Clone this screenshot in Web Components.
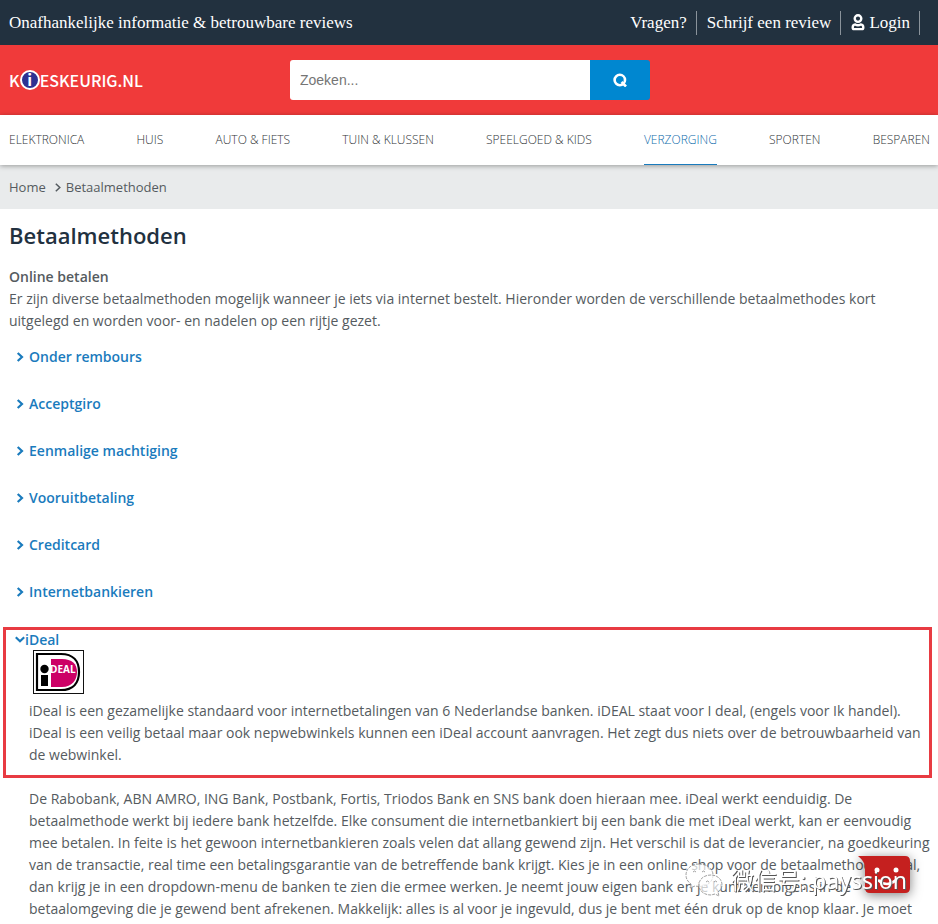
<!DOCTYPE html>
<html lang="nl">
<head>
<meta charset="utf-8">
<meta name="viewport" content="width=device-width, initial-scale=1">
<title>Betaalmethoden - Kieskeurig.nl</title>
<style>
  body {
    margin: 0;
    background: #fff;
    color: #555b60;
    font: 14px/22px "Open Sans", "Noto Sans", sans-serif;
  }
  main {
    padding: 11px 8px 0 9px;
  }
  h1 {
    margin: 0 0 16px;
    color: #22313f;
    font-size: 22px;
    font-weight: 600;
    line-height: 30px;
  }
  h2 {
    margin: 0;
    font-size: 14px;
    font-weight: 600;
    line-height: 22px;
  }
  p {
    margin: 0;
  }
  .more {
    margin: 10px 0 0 20px;
  }
</style>
</head>
<body>
<top-bar>
  Onafhankelijke informatie &amp; betrouwbare reviews
  <a slot="links" href="#vragen">Vragen?</a>
  <a slot="links" href="#review">Schrijf een review</a>
  <a slot="links" href="#login"><user-icon></user-icon>Login</a>
</top-bar>
<site-header></site-header>
<site-nav active="Verzorging"></site-nav>
<bread-crumb>
  <a slot="home" href="#home">Home</a>
  Betaalmethoden
</bread-crumb>
<main>
  <h1>Betaalmethoden</h1>
  <h2>Online betalen</h2>
  <p>Er zijn diverse betaalmethoden mogelijk wanneer je iets via internet bestelt. Hieronder worden de verschillende betaalmethodes kort uitgelegd en worden voor- en nadelen op een rijtje gezet.</p>
  <pay-method>Onder rembours</pay-method>
  <pay-method>Acceptgiro</pay-method>
  <pay-method>Eenmalige machtiging</pay-method>
  <pay-method>Vooruitbetaling</pay-method>
  <pay-method>Creditcard</pay-method>
  <pay-method>Internetbankieren</pay-method>
  <open-method name="iDeal">
    <ideal-logo></ideal-logo>
    <p>iDeal is een gezamelijke standaard voor internetbetalingen van 6 Nederlandse banken. iDEAL staat voor I deal, (engels voor Ik handel). iDeal is een veilig betaal maar ook nepwebwinkels kunnen een iDeal account aanvragen. Het zegt dus niets over de betrouwbaarheid van de webwinkel.</p>
  </open-method>
  <p class="more">De Rabobank, ABN AMRO, ING Bank, Postbank, Fortis, Triodos Bank en SNS bank doen hieraan mee. iDeal werkt eenduidig. De betaalmethode werkt bij iedere bank hetzelfde. Elke consument die internetbankiert bij een bank die met iDeal werkt, kan er eenvoudig mee betalen. In feite is het gewoon internetbankieren zoals velen dat allang gewend zijn. Het verschil is dat de leverancier, na goedkeuring van de transactie, real time een betalingsgarantie van de betreffende bank krijgt. Kies je in een online shop voor de betaalmethode iDeal, dan krijg je in een dropdown-menu de banken te zien die ermee werken. Je neemt jouw eigen bank en je kunt vervolgens in de betaalomgeving die je gewend bent afrekenen. Makkelijk: alles is al voor je ingevuld, dus je bent met één druk op de knop klaar. Je moet</p>
</main>
<chat-badge></chat-badge>
<account-mark>微信号: payssion</account-mark>

<script>
class TopBar extends HTMLElement {
  connectedCallback() {
    this.attachShadow({ mode: 'open' });
    this.shadowRoot.innerHTML = `
      <style>
        :host {
          display: flex;
          justify-content: space-between;
          align-items: center;
          height: 45px;
          padding: 0 18px 0 9px;
          background: #22313f;
          color: #fff;
          font: 17px/24px "Liberation Serif", serif;
        }
        .links {
          display: flex;
        }
        ::slotted(a) {
          display: flex;
          align-items: center;
          gap: 4px;
          padding: 0 9px 0 10px;
          border-right: 1px solid #8a939b;
          color: #fff;
          text-decoration: none;
        }
      </style>
      <div><slot></slot></div>
      <nav class="links"><slot name="links"></slot></nav>
    `;
  }
}
customElements.define('top-bar', TopBar);

class UserIcon extends HTMLElement {
  connectedCallback() {
    this.attachShadow({ mode: 'open' });
    this.shadowRoot.innerHTML = `
      <style>
        :host { display: block; line-height: 0; }
      </style>
      <svg width="14" height="17" viewBox="0 0 14 17" fill="none" stroke="#fff" stroke-width="2.4">
        <circle cx="7" cy="4.6" r="3.3"/>
        <path d="M4.200 10.400C2.600 10.600 1.700 11.600 1.700 13.400c0 1.200.5 1.700 1.400 1.700h7.800c.9 0 1.400-.5 1.400-1.700 0-1.800-.9-2.800-2.500-3-1.600 1-4 1-5.600 0z"/>
      </svg>
    `;
  }
}
customElements.define('user-icon', UserIcon);

class SiteHeader extends HTMLElement {
  connectedCallback() {
    this.attachShadow({ mode: 'open' });
    this.shadowRoot.innerHTML = `
      <style>
        :host {
          display: grid;
          grid-template-columns: 1fr 360px 1fr;
          align-items: center;
          height: 70px;
          padding: 0 7px 0 9px;
          background: #f03a3a;
        }
        .logo {
          display: flex;
          align-items: center;
          color: #fff;
          font: 500 16px/24px "Noto Sans CJK SC", "Open Sans", sans-serif;
          text-decoration: none;
        }
        .dot {
          box-sizing: border-box;
          width: 20px;
          height: 20px;
          border: 2px solid #fff;
          border-radius: 50%;
          background: #2e3192;
          font-weight: 700;
          line-height: 15px;
          text-align: center;
        }
        form {
          display: flex;
          height: 40px;
        }
        input {
          flex: 1;
          min-width: 0;
          padding: 0 10px;
          border: 0;
          border-radius: 3px 0 0 3px;
          background: #fff;
          font: 14px "Liberation Sans", sans-serif;
        }
        input::placeholder { color: #757575; }
        button {
          display: flex;
          align-items: center;
          justify-content: center;
          width: 60px;
          padding: 0;
          border: 0;
          border-radius: 0 3px 3px 0;
          background: #0087d0;
        }
      </style>
      <a class="logo" href="#home">K<span class="dot">i</span>ESKEURIG.NL</a>
      <form>
        <input type="text" placeholder="Zoeken..." aria-label="Zoeken">
        <button type="button" aria-label="Zoek">
          <svg width="14" height="14" viewBox="0 0 14 14" fill="none" stroke="#fff" stroke-width="2.6">
            <circle cx="6.800" cy="7" r="5.200"/>
            <path d="M8.500 9l4.500 4.500"/>
          </svg>
        </button>
      </form>
    `;
  }
}
customElements.define('site-header', SiteHeader);

class SiteNav extends HTMLElement {
  connectedCallback() {
    const items = ['Elektronica', 'Huis', 'Auto & Fiets', 'Tuin & Klussen', 'Speelgoed & Kids', 'Verzorging', 'Sporten', 'Besparen'];
    const active = this.getAttribute('active');
    this.attachShadow({ mode: 'open' });
    this.shadowRoot.innerHTML = `
      <style>
        :host {
          display: block;
          position: relative;
          background: #fff;
          box-shadow: 0 1px 5px rgba(0,0,0,0.35);
        }
        nav {
          display: flex;
          justify-content: space-between;
          padding: 0 8px 0 9px;
        }
        a {
          box-sizing: border-box;
          height: 50px;
          border-bottom: 1px solid transparent;
          color: #303437;
          font-size: 12px;
          font-weight: 300;
          line-height: 49px;
          text-decoration: none;
          text-transform: uppercase;
        }
        .active {
          border-color: #1a7bbd;
          color: #0f6cab;
        }
      </style>
      <nav>${items.map(item => `<a href="#"${item === active ? ' class="active"' : ''}>${item.replace('&', '&amp;')}</a>`).join('')}</nav>
    `;
  }
}
customElements.define('site-nav', SiteNav);

class BreadCrumb extends HTMLElement {
  connectedCallback() {
    this.attachShadow({ mode: 'open' });
    this.shadowRoot.innerHTML = `
      <style>
        :host {
          display: flex;
          align-items: center;
          height: 44px;
          padding: 0 9px;
          background: #e9ebec;
          font-size: 13px;
        }
        svg { margin: 0 5px 0 9px; }
        ::slotted(a) {
          color: inherit;
          text-decoration: none;
        }
      </style>
      <slot name="home"></slot>
      <svg width="6" height="9" viewBox="0 0 6 9" fill="none" stroke="#555b60" stroke-width="1.500"><path d="M.8 .8L4.800 4.500L.8 8.200"/></svg>
      <span><slot></slot></span>
    `;
  }
}
customElements.define('bread-crumb', BreadCrumb);

class PayMethod extends HTMLElement {
  connectedCallback() {
    this.attachShadow({ mode: 'open' });
    this.shadowRoot.innerHTML = `
      <style>
        :host {
          display: block;
          padding: 14px 0 11px 7px;
        }
        a {
          display: inline-flex;
          align-items: center;
          gap: 5px;
          color: #1a7bbd;
          font-weight: 600;
          text-decoration: none;
        }
      </style>
      <a href="#"><svg width="8" height="10" viewBox="0 0 8 10" fill="none" stroke="currentColor" stroke-width="2.200"><path d="M1.700 1L6 5L1.700 9"/></svg><slot></slot></a>
    `;
  }
}
customElements.define('pay-method', PayMethod);

class OpenMethod extends HTMLElement {
  connectedCallback() {
    this.attachShadow({ mode: 'open' });
    this.shadowRoot.innerHTML = `
      <style>
        :host {
          display: block;
          margin: 13px -2px 0 -6px;
          padding: 0 6px 9px 9px;
          border: 3px solid #e83b42;
        }
        a {
          display: flex;
          align-items: center;
          color: #1a7bbd;
          font-weight: 600;
          line-height: 20px;
          text-decoration: none;
        }
        .body { padding-left: 14px; }
      </style>
      <a href="#"><svg width="10" height="8" viewBox="0 0 10 8" fill="none" stroke="currentColor" stroke-width="2.200"><path d="M.8 1.200L5 5.200L9.200 1.200"/></svg>${this.getAttribute('name')}</a>
      <div class="body"><slot></slot></div>
    `;
  }
}
customElements.define('open-method', OpenMethod);

class IdealLogo extends HTMLElement {
  connectedCallback() {
    this.attachShadow({ mode: 'open' });
    this.shadowRoot.innerHTML = `
      <style>
        :host {
          display: block;
          height: 44px;
          margin: 0 0 6px 4px;
        }
        svg { display: block; }
        text { font: 700 10px "Open Sans", sans-serif; }
      </style>
      <svg width="51" height="44" viewBox="0 0 51 44">
        <rect x=".5" y=".5" width="50" height="43" fill="#fff" stroke="#111"/>
        <path d="M4 4h24c12 0 18 7 18 18s-6 18-18 18H4z" fill="#fff" stroke="#000" stroke-width="2.200"/>
        <path d="M18 9h11c10 0 15 5 15 13s-5 15-15 15H18z" fill="#cc0066"/>
        <circle cx="11.500" cy="19" r="4.200"/>
        <path d="M8 25h7v11H8z"/>
        <text x="17" y="23" fill="#fff">DEAL</text>
      </svg>
    `;
  }
}
customElements.define('ideal-logo', IdealLogo);

// floating feedback badge, bottom right
class ChatBadge extends HTMLElement {
  connectedCallback() {
    this.attachShadow({ mode: 'open' });
    this.shadowRoot.innerHTML = `
      <style>
        :host {
          position: fixed;
          right: 28px;
          bottom: 30px;
        }
        svg {
          display: block;
          overflow: visible;
          filter: drop-shadow(0 2px 6px rgba(0,0,0,0.5));
        }
      </style>
      <svg width="52" height="38" viewBox="0 0 52 38">
        <path d="M0 0h47q5 0 5 5v27q0 5-5 5H12q-5 0-5-5V10q-1-5-7-10z" fill="#c5201f"/>
        <circle cx="19" cy="14" r="2.500" fill="#fff"/>
        <circle cx="38" cy="14" r="2.500" fill="#fff"/>
        <path d="M20 24q9 8 18 0" fill="none" stroke="#fff" stroke-width="2.500"/>
      </svg>
    `;
  }
}
customElements.define('chat-badge', ChatBadge);

class AccountMark extends HTMLElement {
  connectedCallback() {
    this.attachShadow({ mode: 'open' });
    this.shadowRoot.innerHTML = `
      <style>
        :host {
          position: fixed;
          right: 31px;
          bottom: 26px;
          display: flex;
          align-items: center;
          gap: 8px;
          color: #fff;
          font: 23px/34px "Noto Sans", "Noto Sans CJK SC", sans-serif;
          text-shadow: 1px 1px 0 #555;
          white-space: nowrap;
        }
      </style>
      <svg width="38" height="36" viewBox="0 0 38 36" fill="#fff" fill-opacity=".7" stroke="#888" stroke-width=".8" stroke-dasharray="3 1">
        <path d="M14 2C6 2 1 7 1 13c0 4 2 7 5 9l-1 4 5-2c10 2 18-3 18-11C28 7 22 2 14 2z"/>
        <path d="M26 13c-7 0-12 4-12 10s5 10 12 10l4-1 4 2-1-4c2-2 4-4 4-7 0-6-5-10-11-10z"/>
        <g fill="none" stroke-dasharray="none"><path d="M8 10q1.500-2 3 0M17 10q1.500-2 3 0M21 20q1.500-2 3 0M29 20q1.500-2 3 0"/></g>
      </svg>
      <span><slot></slot></span>
    `;
  }
}
customElements.define('account-mark', AccountMark);
</script>
</body>
</html>
